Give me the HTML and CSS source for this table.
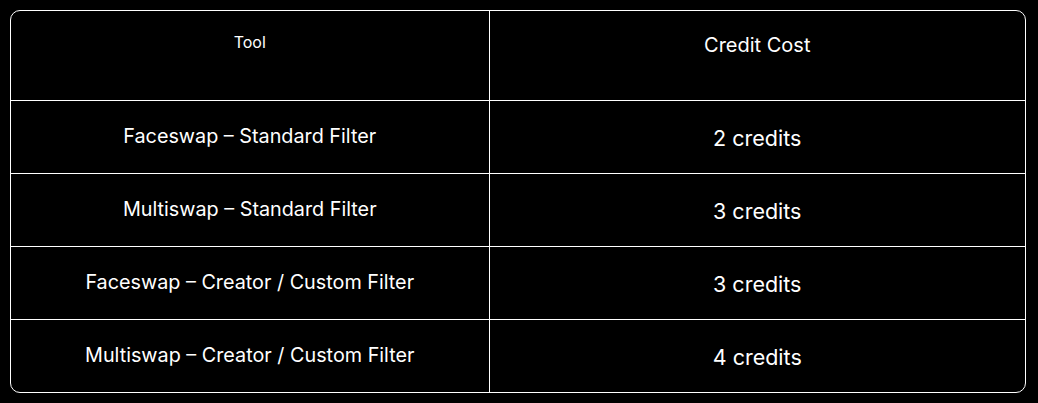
FILE: index.html
```html
<!DOCTYPE html>
<html lang="en">
<head>
<meta charset="utf-8">
<title>Credit Costs</title>
<link rel="stylesheet" href="styles.css">
</head>
<body>
<div class="table-wrap">
  <table class="credits">
    <colgroup>
      <col class="col-tool">
      <col class="col-cost">
    </colgroup>
    <thead>
      <tr class="head-row">
        <th class="cell th-tool">Tool</th>
        <th class="cell th-cost">Credit Cost</th>
      </tr>
    </thead>
    <tbody>
      <tr class="body-row">
        <td class="cell td-tool">Faceswap – Standard Filter</td>
        <td class="cell td-cost">2 credits</td>
      </tr>
      <tr class="body-row">
        <td class="cell td-tool">Multiswap – Standard Filter</td>
        <td class="cell td-cost">3 credits</td>
      </tr>
      <tr class="body-row">
        <td class="cell td-tool">Faceswap – Creator / Custom Filter</td>
        <td class="cell td-cost">3 credits</td>
      </tr>
      <tr class="body-row">
        <td class="cell td-tool">Multiswap – Creator / Custom Filter</td>
        <td class="cell td-cost">4 credits</td>
      </tr>
    </tbody>
  </table>
</div>
</body>
</html>
```

FILE: styles.css
```css
html, body {
  margin: 0;
  padding: 0;
  background: #000;
}

body {
  padding: 10px 12px 10px 10px;
  font-family: Inter, "Noto Sans", sans-serif;
  color: #fff;
}

.table-wrap {
  border: 1px solid #fff;
  border-radius: 10px;
  overflow: hidden;
}

.credits {
  width: 100%;
  border-collapse: collapse;
  table-layout: fixed;
}

.col-tool {
  width: 478px;
}

.cell {
  padding: 0;
  text-align: center;
  vertical-align: top;
  line-height: normal;
  font-weight: 400;
  box-sizing: border-box;
}

.th-tool,
.td-tool {
  border-right: 1px solid #fff;
}

.body-row .cell {
  border-top: 1px solid #fff;
  height: 73px;
}

.head-row .cell {
  height: 89px;
}

.th-tool {
  font-size: 16px;
  padding-top: 21px;
}

.th-cost {
  font-size: 20px;
  padding-top: 22px;
}

.td-tool {
  font-size: 19.8px;
  padding-top: 23px;
}

.td-cost {
  font-size: 21.5px;
  padding-top: 24px;
}
```
